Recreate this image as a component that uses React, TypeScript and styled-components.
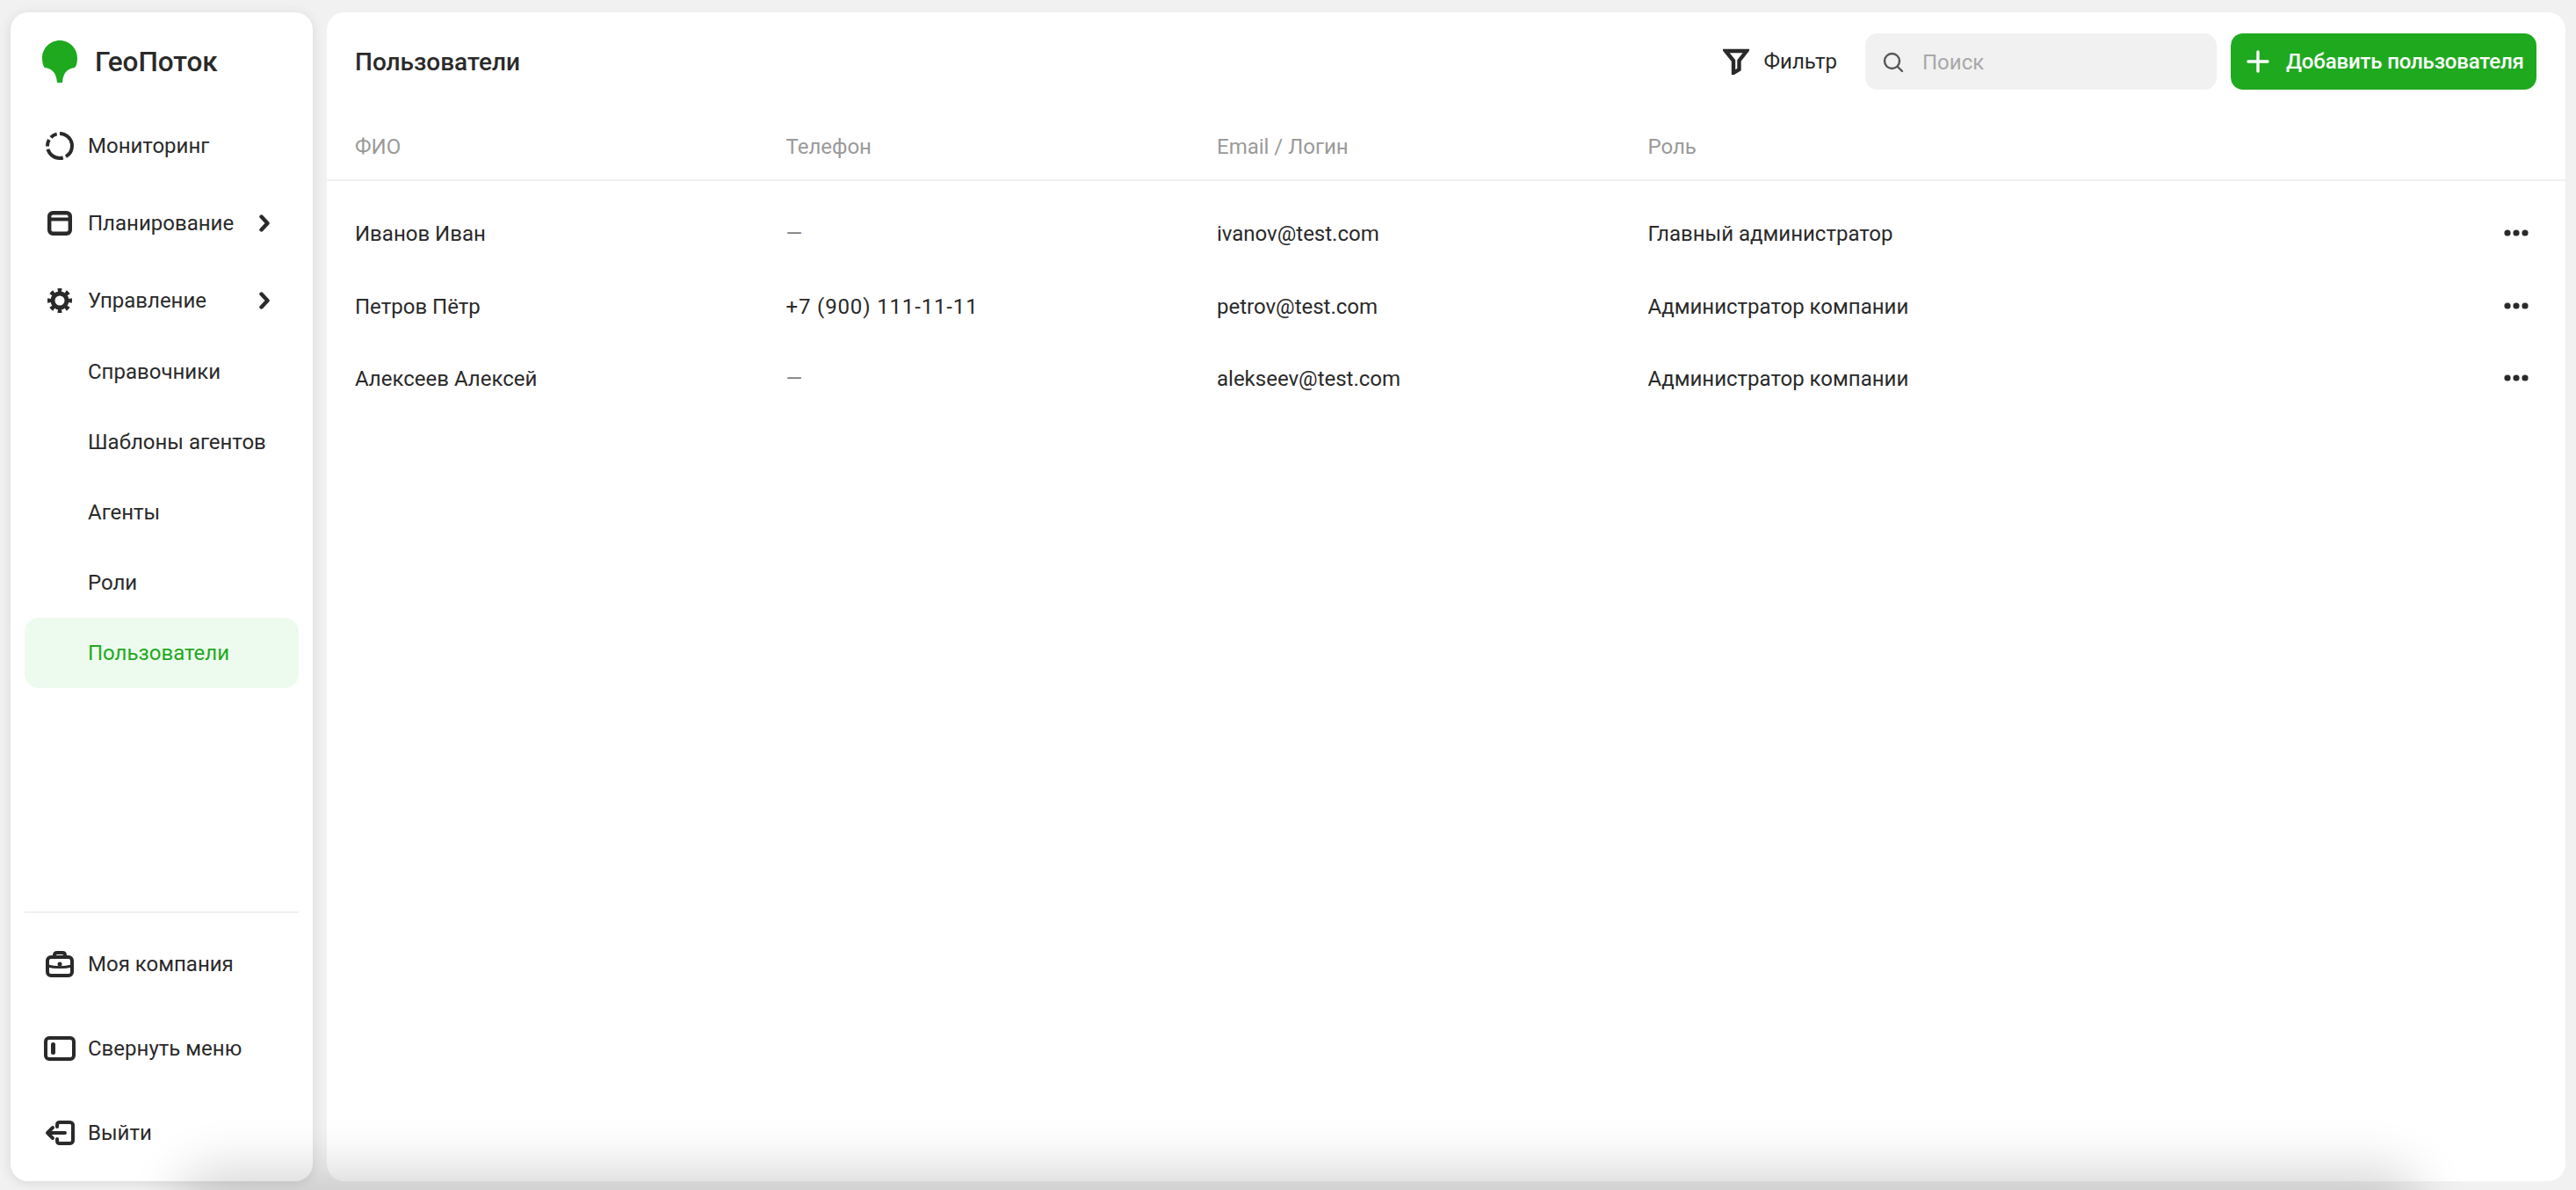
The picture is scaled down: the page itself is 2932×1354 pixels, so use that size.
import React from "react";
import styled, { createGlobalStyle } from "styled-components";

const GlobalStyle = createGlobalStyle`
  html, body {
    margin: 0;
    height: 100%;
    overflow: hidden;
    background: #f1f1f1;
  }
  body {
    font-family: Roboto, "Noto Sans", sans-serif;
    color: #2a2a2a;
  }
  * {
    box-sizing: border-box;
  }
`;

const Page = styled.div`
  display: flex;
  gap: 16px;
  height: 100vh;
  padding: 14px 12px 10px;
`;

const Sidebar = styled.aside`
  display: flex;
  flex-direction: column;
  flex: 0 0 344px;
  background: #fff;
  border-radius: 20px;
  box-shadow: 0 2px 14px rgba(0, 0, 0, 0.1);
  padding: 32px 16px 7px;
`;

const Logo = styled.div`
  display: flex;
  align-items: center;
  gap: 20px;
  height: 48px;
  margin-left: 20px;
  margin-bottom: 28px;
  font-size: 31.5px;
  font-weight: 500;
`;

const Nav = styled.nav`
  display: flex;
  flex-direction: column;
  flex: 1;
`;

const NavRow = styled.div<{ $height?: number; $pad?: number }>`
  display: flex;
  align-items: center;
  height: ${(p) => p.$height ?? 88}px;
  padding-top: ${(p) => p.$pad ?? 0}px;
  font-size: 24px;
`;

const IconSlot = styled.span`
  display: flex;
  align-items: center;
  justify-content: center;
  flex: 0 0 48px;
  margin-left: 16px;
  margin-right: 8px;
  color: #2a2a2a;
`;

const Chevron = styled.svg`
  margin-left: auto;
  margin-right: 33px;
`;

const SubRow = styled.div<{ $active?: boolean }>`
  display: flex;
  align-items: center;
  height: 80px;
  padding-left: 72px;
  font-size: 24px;
  border-radius: 16px;
  color: ${(p) => (p.$active ? "#1fa91f" : "#2a2a2a")};
  background: ${(p) => (p.$active ? "#edfbee" : "transparent")};
`;

const Spacer = styled.div`
  flex: 1;
`;

const Divider = styled.div`
  height: 2px;
  background: #f1f1f1;
  margin-bottom: 10px;
`;

const Main = styled.main`
  flex: 1;
  min-width: 0;
  background: #fff;
  border-radius: 20px;
`;

const Toolbar = styled.header`
  display: flex;
  align-items: center;
  height: 112px;
  padding: 0 33px 0 32px;
`;

const Title = styled.h1`
  margin: 0;
  flex: 1;
  font-size: 28px;
  font-weight: 500;
`;

const FilterButton = styled.div`
  display: flex;
  align-items: center;
  gap: 17px;
  margin-right: 32px;
  font-size: 24px;
`;

const SearchBox = styled.div`
  display: flex;
  align-items: center;
  gap: 21px;
  width: 400px;
  height: 64px;
  padding-left: 20px;
  padding-top: 1px;
  margin-right: 16px;
  background: #f1f1f1;
  border-radius: 14px;
  font-size: 24px;
  color: #a8a8a8;
`;

const AddButton = styled.div`
  display: flex;
  align-items: center;
  gap: 19px;
  width: 348px;
  height: 64px;
  padding-left: 18px;
  background: #1fa91f;
  border-radius: 14px;
  font-size: 24px;
  font-weight: 500;
  letter-spacing: -0.15px;
  color: #fff;
`;

const columns = "490.5px 490.5px 490.5px 1fr 70px";

const HeadRow = styled.div`
  display: grid;
  grid-template-columns: ${columns};
  align-items: center;
  height: 80px;
  padding: 3px 0 0 32px;
  border-bottom: 2px solid #f1f1f1;
  font-size: 24px;
  color: #9a9a9a;
`;

const Rows = styled.div`
  padding-top: 19px;
`;

const Row = styled.div`
  display: grid;
  grid-template-columns: ${columns};
  align-items: center;
  height: 82.5px;
  padding-left: 32px;
  font-size: 24px;
`;

const Dash = styled.span`
  color: #808080;
`;

const Phone = styled.span`
  letter-spacing: 0.85px;
`;

const Dots = styled.svg`
  justify-self: start;
  margin-top: -2px;
`;

const BottomShade = styled.div`
  position: fixed;
  left: 225px;
  right: 200px;
  bottom: -50px;
  height: 50px;
  border-radius: 60px;
  box-shadow: 0 0 60px 24px rgba(0, 0, 0, 0.16);
  pointer-events: none;
`;

type User = { name: string; phone: string; email: string; role: string };

const users: User[] = [
  { name: "Иванов Иван", phone: "—", email: "ivanov@test.com", role: "Главный администратор" },
  { name: "Петров Пётр", phone: "+7 (900) 111-11-11", email: "petrov@test.com", role: "Администратор компании" },
  { name: "Алексеев Алексей", phone: "—", email: "alekseev@test.com", role: "Администратор компании" },
];

const subItems = ["Справочники", "Шаблоны агентов", "Агенты", "Роли"];

const stroke = {
  fill: "none",
  stroke: "currentColor",
  strokeWidth: 4,
  strokeLinecap: "round" as const,
  strokeLinejoin: "round" as const,
};

function LogoIcon() {
  return (
    <svg width="40" height="48" viewBox="0 0 40 48">
      <path
        fill="#1fa91f"
        d="M20 0C31 0 40 9 40 20C40 25 39 29 37 31C29 32 24 36 23 48H17C16 36 11 32 3 31C1 29 0 25 0 20C0 9 9 0 20 0Z"
      />
    </svg>
  );
}

function MonitoringIcon() {
  return (
    <svg width="32" height="32" viewBox="0 0 32 32">
      <circle
        cx="16"
        cy="16"
        r="14"
        fill="none"
        stroke="currentColor"
        strokeWidth="4"
        pathLength={360}
        strokeDasharray="150 14 90 14 32 14 32 14"
        transform="rotate(-90 16 16)"
      />
    </svg>
  );
}

function PlanIcon() {
  return (
    <svg width="28" height="28" viewBox="0 0 28 28">
      <rect x="2.2" y="2.2" width="23.6" height="23.6" rx="4" {...stroke} strokeWidth={4.4} />
      <path d="M3 9.5H25" {...stroke} strokeLinecap="butt" />
    </svg>
  );
}

function GearIcon() {
  return (
    <svg width="28" height="28" viewBox="0 0 28 28">
      <circle cx="14" cy="14" r="8" fill="none" stroke="currentColor" strokeWidth="5" />
      <circle
        cx="14"
        cy="14"
        r="11.5"
        fill="none"
        stroke="currentColor"
        strokeWidth="5"
        pathLength={80}
        strokeDasharray="5 5"
        strokeDashoffset="2.5"
      />
    </svg>
  );
}

function ChevronIcon() {
  return (
    <Chevron width="12" height="20" viewBox="0 0 12 20">
      <path d="M2.5 2.5L9.5 10L2.5 17.5" {...stroke} strokeWidth={4.4} />
    </Chevron>
  );
}

function BriefcaseIcon() {
  return (
    <svg width="32" height="30" viewBox="0 0 32 30">
      <rect x="2" y="7" width="28" height="21" rx="4" {...stroke} />
      <path d="M10 7V5C10 3 11 2 13 2H19C21 2 22 3 22 5V7" {...stroke} />
      <path d="M2 17C10 19 22 19 30 17" {...stroke} strokeWidth={3} />
      <circle cx="16" cy="15" r="2.5" fill="currentColor" />
    </svg>
  );
}

function CollapseIcon() {
  return (
    <svg width="36" height="28" viewBox="0 0 36 28">
      <rect x="2" y="2" width="32" height="24" rx="4" {...stroke} />
      <rect x="8" y="7" width="5" height="14" rx="2.5" fill="currentColor" />
    </svg>
  );
}

function LogoutIcon() {
  return (
    <svg width="34" height="28" viewBox="0 0 34 28">
      <path d="M14 7V5C14 3 15 2 17 2H28C30 2 32 3 32 5V23C32 25 30 26 28 26H17C15 26 14 25 14 23V21" {...stroke} />
      <path d="M23 14H3M9 8L3 14L9 20" {...stroke} />
    </svg>
  );
}

function FilterIcon() {
  return (
    <svg width="30" height="30" viewBox="0 0 30 30">
      <path d="M3 3H27L18.5 14V24L12 28V14Z" fill="none" stroke="currentColor" strokeWidth="4.4" strokeLinejoin="miter" />
    </svg>
  );
}

function SearchIcon() {
  return (
    <svg width="24" height="24" viewBox="0 0 24 24" style={{ color: "#555" }}>
      <circle cx="10.5" cy="10.5" r="8.5" fill="none" stroke="currentColor" strokeWidth="2.4" />
      <path d="M17 17L22 22" fill="none" stroke="currentColor" strokeWidth="2.4" strokeLinecap="round" />
    </svg>
  );
}

function PlusIcon() {
  return (
    <svg width="26" height="26" viewBox="0 0 26 26">
      <path d="M13 2V24M2 13H24" fill="none" stroke="#fff" strokeWidth="3.4" strokeLinecap="round" />
    </svg>
  );
}

function MoreIcon() {
  return (
    <Dots width="28" height="8" viewBox="0 0 28 8">
      <circle cx="4" cy="4" r="3.6" fill="#2a2a2a" />
      <circle cx="14" cy="4" r="3.6" fill="#2a2a2a" />
      <circle cx="24" cy="4" r="3.6" fill="#2a2a2a" />
    </Dots>
  );
}

export default function App() {
  return (
    <>
      <GlobalStyle />
      <Page>
        <Sidebar>
          <Logo>
            <LogoIcon />
            <span>ГеоПоток</span>
          </Logo>
          <Nav>
            <NavRow>
              <IconSlot>
                <MonitoringIcon />
              </IconSlot>
              Мониторинг
            </NavRow>
            <NavRow>
              <IconSlot>
                <PlanIcon />
              </IconSlot>
              Планирование
              <ChevronIcon />
            </NavRow>
            <NavRow $height={85} $pad={3}>
              <IconSlot>
                <GearIcon />
              </IconSlot>
              Управление
              <ChevronIcon />
            </NavRow>
            {subItems.map((item) => (
              <SubRow key={item}>{item}</SubRow>
            ))}
            <SubRow $active>Пользователи</SubRow>
            <Spacer />
            <Divider />
            <NavRow $height={96}>
              <IconSlot>
                <BriefcaseIcon />
              </IconSlot>
              Моя компания
            </NavRow>
            <NavRow $height={96}>
              <IconSlot>
                <CollapseIcon />
              </IconSlot>
              Свернуть меню
            </NavRow>
            <NavRow $height={96}>
              <IconSlot>
                <LogoutIcon />
              </IconSlot>
              Выйти
            </NavRow>
          </Nav>
        </Sidebar>
        <Main>
          <Toolbar>
            <Title>Пользователи</Title>
            <FilterButton>
              <FilterIcon />
              Фильтр
            </FilterButton>
            <SearchBox>
              <SearchIcon />
              Поиск
            </SearchBox>
            <AddButton>
              <PlusIcon />
              Добавить пользователя
            </AddButton>
          </Toolbar>
          <HeadRow>
            <span>ФИО</span>
            <span>Телефон</span>
            <span>Email / Логин</span>
            <span>Роль</span>
          </HeadRow>
          <Rows>
            {users.map((user) => (
              <Row key={user.email}>
                <span>{user.name}</span>
                {user.phone === "—" ? <Dash>—</Dash> : <Phone>{user.phone}</Phone>}
                <span>{user.email}</span>
                <span>{user.role}</span>
                <MoreIcon />
              </Row>
            ))}
          </Rows>
        </Main>
      </Page>
      <BottomShade />
    </>
  );
}
